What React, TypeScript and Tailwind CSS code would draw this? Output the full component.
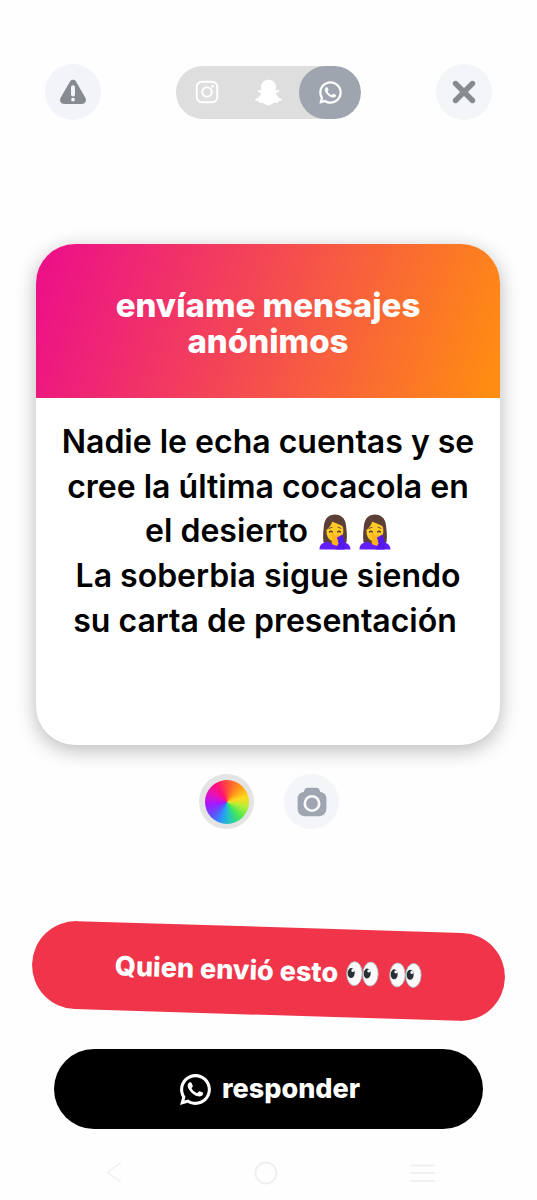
import { FaSnapchatGhost } from "react-icons/fa";
import { RiWhatsappLine } from "react-icons/ri";

const WarningIcon = () => (
  <svg viewBox="0 0 28 26" className="h-[26px] w-[28px]">
    <path
      d="M11 2.4c1.3-2.2 4.7-2.2 6 0l9.4 16.4c1.5 2.9-.3 6.2-3.6 6.2H5.2c-3.3 0-5.1-3.3-3.6-6.2z"
      fill="#868b92"
    />
    <path d="M14 8.3v7.2" stroke="#f3f4f9" strokeWidth="4" strokeLinecap="round" />
    <circle cx="14" cy="20.6" r="1.9" fill="#f3f4f9" />
  </svg>
);

const CloseIcon = () => (
  <svg viewBox="0 0 24 24" className="size-6">
    <path d="M3.5 3.5l17 17M20.5 3.5l-17 17" stroke="#868b92" strokeWidth="5.4" strokeLinecap="round" />
  </svg>
);

const InstagramIcon = () => (
  <svg viewBox="0 0 24 24" className="size-6" fill="none" stroke="#fff">
    <rect x="1.7" y="1.7" width="20.6" height="20.6" rx="5.2" strokeWidth="1.9" />
    <circle cx="12" cy="12" r="4.8" strokeWidth="2" />
    <circle cx="17.7" cy="6.3" r="1.3" fill="#fff" stroke="none" />
  </svg>
);

const CameraIcon = () => (
  <svg viewBox="0 0 30 30" className="size-[30px]">
    <path
      d="M10.3.8h9.4c1.3 0 2.1.7 2.6 1.8l1 2.3c3.8.4 6.1 2.7 6.1 6.7v9.6c0 5-3 8-8 8H8.6c-5 0-8-3-8-8v-9.600c0-4 2.300-6.300 6.100-6.700l1-2.300c.5-1.100 1.300-1.800 2.600-1.800z"
      fill="#9fa6b1"
    />
    <circle cx="15" cy="16.500" r="7.200" fill="none" stroke="#f9fafc" strokeWidth="2.600" />
  </svg>
);

const FacepalmIcon = () => (
  <svg viewBox="0 0 32 36" role="img" aria-label="🤦‍♀️" className="h-9 w-8">
    <path d="M4.500 28C3.500 22 4.500 16 5 11 6 4 10 .5 16 .5S26 4 27 11c.5 5 1.500 11 .5 17-3 4-20 4-23 0z" fill="#5c4037" />
    <path d="M13 23h7v8h-7z" fill="#e59600" />
    <path d="M.5 35.500C.5 31 3 28.500 8 28c3 0 4 2 8 2s6-2 9-1.500c4 .5 6.500 3 6.500 7z" fill="#651fff" />
    <path d="M7.500 16C10 14 12 11 13.500 7.500 16 9.500 22 10 24 13c1.500 8-2 14.500-8 14.500S7 22 7.500 16z" fill="#ffca28" />
    <path d="M10 14.500l3-1.200M19 13.200l3 1.200" stroke="#6d4c41" strokeWidth="1" strokeLinecap="round" />
    <path d="M10.500 18c1-1 2-1 3 0M18.500 18c1-1 2-1 3 0" stroke="#543930" strokeWidth="1.200" strokeLinecap="round" fill="none" />
    <path
      d="M13.500 30.500c-1.500-2-1-4 .5-5.500l-1.500-4.500c-.4-1.500 1-2 1.700-.8L16 22l3.500-1.500 4 2.500-1 7-4 2z"
      fill="#f9b41f"
    />
    <path d="M18 23.500l5.500-3L26.500 30l-1 5.500h-9l3-6z" fill="#5518ee" />
  </svg>
);

const EyesIcon = () => (
  <svg viewBox="0 0 33 26" role="img" aria-label="👀" className="h-[26px] w-[33px]">
    <g stroke="#b0bec5" strokeWidth=".9" fill="#fafafa">
      <ellipse cx="8.500" cy="13" rx="7.700" ry="12" />
      <ellipse cx="24.500" cy="13" rx="7.700" ry="12" />
    </g>
    <g fill="#263035">
      <ellipse cx="5.200" cy="12.500" rx="3.500" ry="5" />
      <ellipse cx="21.200" cy="12.500" rx="3.500" ry="5" />
    </g>
    <g fill="#fafafa">
      <circle cx="6.800" cy="10" r="1.500" />
      <circle cx="22.800" cy="10" r="1.500" />
    </g>
  </svg>
);

const App = () => {
  return (
    <div className="flex h-[1200px] w-[537px] flex-col overflow-hidden bg-[#fefefe] font-[Inter,sans-serif]">
      <header className="mt-16 flex h-14 items-center justify-between pl-[45px] pr-[45px]">
        <button className="flex size-14 items-center justify-center rounded-full bg-[#f3f4f9]">
          <WarningIcon />
        </button>
        <div className="flex h-[53px] w-[185px] overflow-hidden rounded-full bg-[#dededf] text-white">
          <div className="flex flex-1 items-center justify-center">
            <InstagramIcon />
          </div>
          <div className="flex flex-1 items-center justify-center">
            <FaSnapchatGhost size={27} />
          </div>
          <div className="flex w-[62px] items-center justify-center rounded-full bg-[#9ea5af]">
            <RiWhatsappLine size={27} />
          </div>
        </div>
        <button className="flex size-14 items-center justify-center rounded-full bg-[#f4f5f9]">
          <CloseIcon />
        </button>
      </header>

      <main className="ml-9 mt-[124px] h-[501px] w-[464px] overflow-hidden rounded-[39px] bg-white shadow-[0_5px_20px_rgba(0,0,0,0.28)]">
        <h1 className="flex h-[154px] flex-col items-center justify-center bg-[linear-gradient(108deg,#ec1187_3%,#f44a52_48%,#ff8d12_98%)] pt-1 text-[33px] font-extrabold leading-9 text-white">
          <span className="whitespace-nowrap">envíame mensajes</span>
          <span className="whitespace-nowrap">anónimos</span>
        </h1>
        <div className="flex flex-col items-center pt-[22px] text-[32px] font-semibold leading-[44.7px] text-black">
          <span className="whitespace-nowrap">Nadie le echa cuentas y se</span>
          <span className="whitespace-nowrap">cree la última cocacola en</span>
          <span className="flex items-center whitespace-nowrap">
            <span className="mr-[11px]">el desierto</span>
            <span className="flex gap-2">
              <FacepalmIcon />
              <FacepalmIcon />
            </span>
          </span>
          <span className="whitespace-nowrap">La soberbia sigue siendo</span>
          <span className="mr-1.5 whitespace-nowrap">su carta de presentación</span>
        </div>
      </main>

      <div className="ml-[199px] mt-[29px] flex gap-[30px]">
        <button className="flex size-[55px] items-center justify-center rounded-full bg-[#e4e4e5]">
          <span className="size-11 rounded-full bg-[conic-gradient(#ff4a3d_0deg,#ff9318_38deg,#ffd91f_75deg,#b6ee35_105deg,#47e656_140deg,#24c9b5_170deg,#269ff5_195deg,#5a55ff_225deg,#a418ff_262deg,#e312c0_295deg,#ff1277_330deg,#ff4a3d_360deg)]" />
        </button>
        <button className="flex size-[55px] items-center justify-center rounded-full bg-[#f4f5f8]">
          <CameraIcon />
        </button>
      </div>

      <button className="ml-8 mt-[98px] flex h-[88px] w-[473px] shrink-0 rotate-[1.75deg] items-center justify-center rounded-full bg-[#f03449] text-[27px] font-extrabold text-white">
        <span className="mr-2 whitespace-nowrap">Quien envió esto</span>
        <EyesIcon />
        <span className="w-2.5" />
        <EyesIcon />
      </button>

      <button className="ml-[54px] mt-[34px] flex h-20 w-[429px] shrink-0 items-center justify-center rounded-full bg-black text-[27px] font-extrabold text-white">
        <RiWhatsappLine size={37} />
        <span className="ml-2">responder</span>
      </button>

      <nav className="mt-8 flex items-center justify-between pl-[106px] pr-[101px]">
        <svg viewBox="0 0 16 24" className="h-6 w-4" fill="none" stroke="#efefef" strokeWidth="1.5">
          <path d="M15 1.500L1.500 11.500 15 21" />
        </svg>
        <svg viewBox="0 0 24 24" className="size-6" fill="none" stroke="#efefef" strokeWidth="1.800">
          <circle cx="12" cy="12" r="10.500" />
        </svg>
        <svg viewBox="0 0 26 24" className="h-6 w-[26px]" stroke="#efefef" strokeWidth="1.800">
          <path d="M1 4.500h24M1 12h24M1 20h24" />
        </svg>
      </nav>
    </div>
  );
};

export default App;
